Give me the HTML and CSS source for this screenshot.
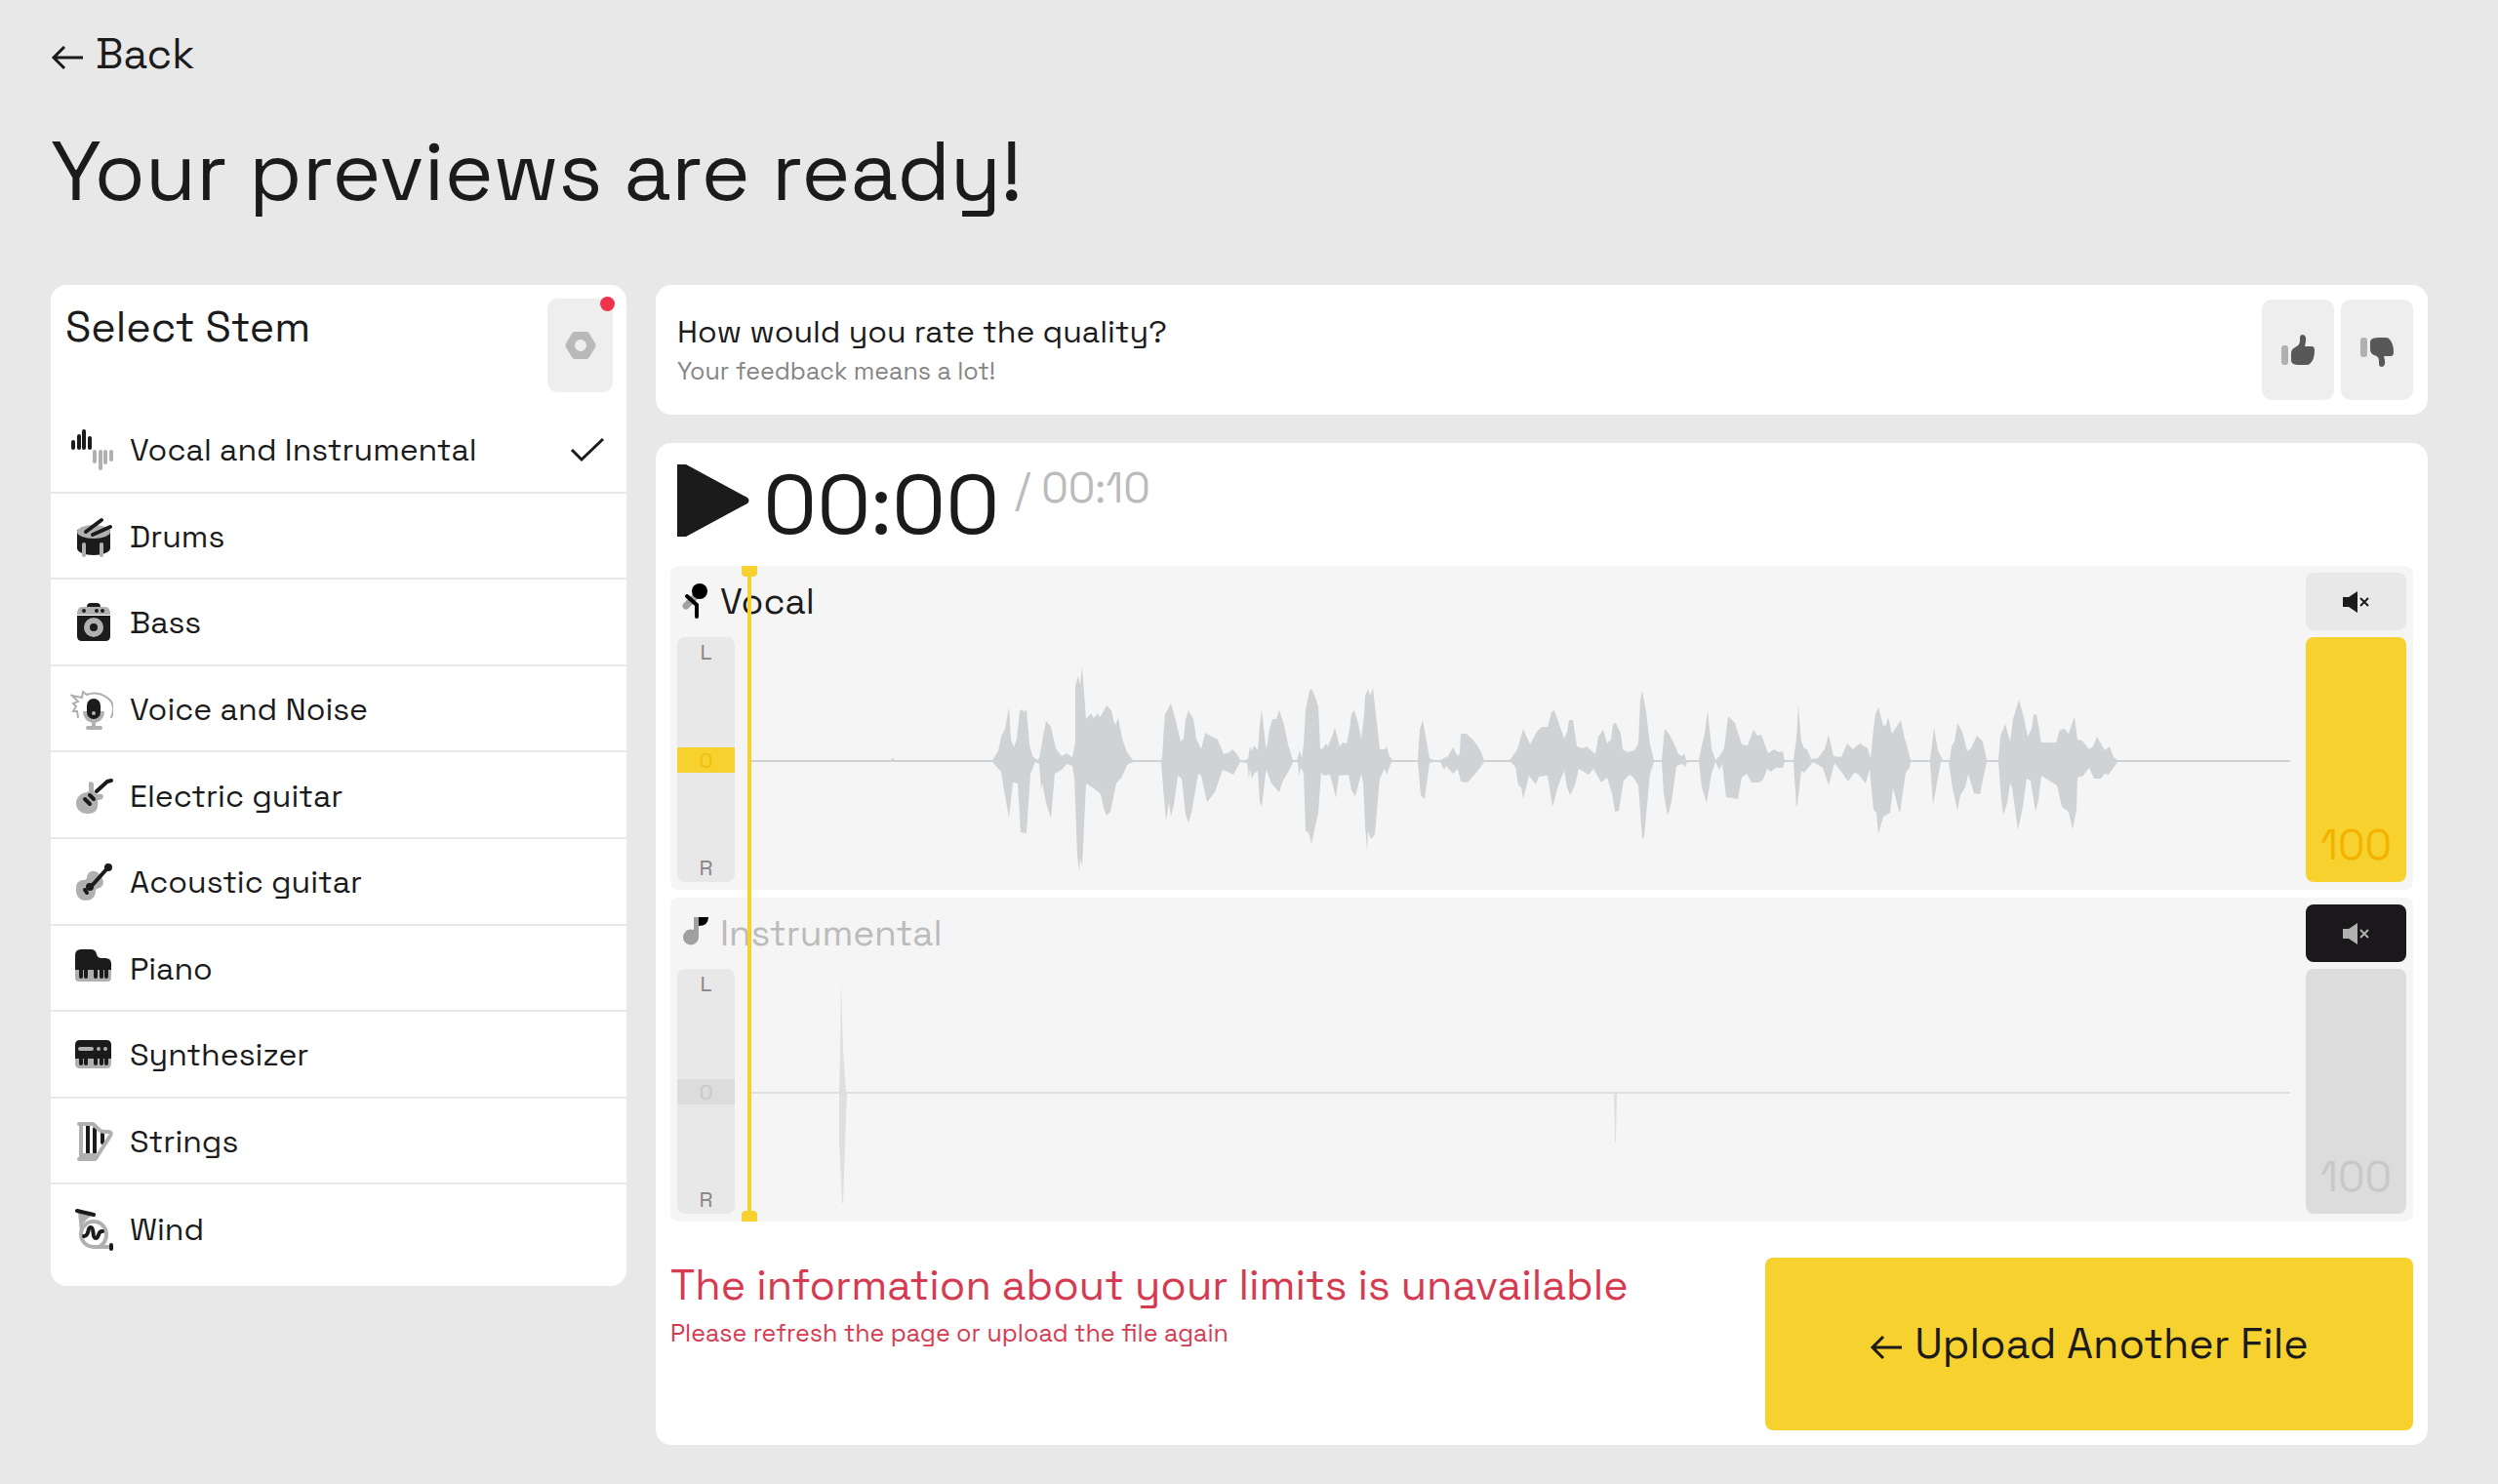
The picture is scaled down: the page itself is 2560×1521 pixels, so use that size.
FILE: index.html
```html
<!DOCTYPE html>
<html lang="en">

<head>
    <meta charset="UTF-8" />
    <meta name="viewport" content="width=device-width, initial-scale=1.0" />
    <title>Your previews are ready!</title>
    <link rel="stylesheet" href="styles.css">
</head>

<body>
    <header class="page-header">
        <a class="back" href="#">
            <svg class="arrow" viewBox="0 0 34 26"><path d="M33 13H3M14 2L3 13l11 11" /></svg>
            Back
        </a>
        <h1>Your previews are ready!</h1>
    </header>

    <main class="layout">
        <!-- Stem list -->
        <aside class="card stems">
            <div class="stems-header">
                <h2>Select Stem</h2>
                <button class="settings-btn" aria-label="Settings">
                    <svg viewBox="0 0 32 28"><path fill-rule="evenodd" d="M10 0h12q2 0 3 2l6 10q1 2 0 4l-6 10q-1 2-3 2H10q-2 0-3-2L1 16q-1-2 0-4L7 2q1-2 3-2zM16 8a6 6 0 1 0 0 12a6 6 0 1 0 0-12z" /></svg>
                    <span class="dot"></span>
                </button>
            </div>

            <ul class="stem-list">
                <li>
                    <button class="stem">
                        <svg class="icon" viewBox="0 0 44 44">
                            <path class="line dark" d="M3 14v6M9 8v12M14 3v17M20 10v10" />
                            <path class="line grey" d="M25 24v10M31 24v17M36 24v11M42 24v8" />
                        </svg>
                        <span>Vocal and Instrumental</span>
                        <svg class="check" viewBox="0 0 36 26"><path d="M2 13l10 10L34 2" /></svg>
                    </button>
                </li>
                <li>
                    <button class="stem">
                        <svg class="icon" viewBox="0 0 44 44">
                            <path class="dark" d="M7 15v19c0 4 8 7 17 7s17-3 17-7V15z" />
                            <ellipse class="grey" cx="24" cy="17" rx="17" ry="7" />
                            <path class="line grey" d="M14 30v11M32 30v11" />
                            <path class="line dark" d="M16 17L32 5M23 20l18-8" />
                        </svg>
                        <span>Drums</span>
                    </button>
                </li>
                <li>
                    <button class="stem">
                        <svg class="icon" viewBox="0 0 44 44">
                            <path class="dark" d="M17 6q0-4 4-4h6q4 0 4 4zM7 15h34v21q0 5-5 5H12q-5 0-5-5z" />
                            <path class="grey" d="M7 14q0-8 5-8h24q5 0 5 8z" />
                            <circle class="dark" cx="14" cy="10" r="2" />
                            <circle class="dark" cx="27" cy="10" r="2" />
                            <circle class="dark" cx="33" cy="10" r="2" />
                            <circle class="grey" cx="24" cy="27" r="10" />
                            <circle class="dark" cx="24" cy="27" r="4" />
                        </svg>
                        <span>Bass</span>
                    </button>
                </li>
                <li>
                    <button class="stem">
                        <svg class="icon" viewBox="0 0 44 44">
                            <path class="thin" d="M8 30l-1-6-4 0 3-5-3-3 5-2-6-6 10 2 1-6 4 3c13-5 28 4 27 16 0 3-1 5-2 7" />
                            <path class="grey" d="M13 24h22c0 7-5 12-11 12s-11-5-11-12z" />
                            <path class="line grey" d="M24 34v6M18 41h13" />
                            <rect class="dark" x="17" y="11" width="14" height="21" rx="7" />
                            <circle class="grey" cx="24" cy="26" r="2" />
                        </svg>
                        <span>Voice and Noise</span>
                    </button>
                </li>
                <li>
                    <button class="stem">
                        <svg class="icon" viewBox="0 0 44 44">
                            <path class="grey" d="M19 8q3-2 5 1v8l4 3q6-1 6 3-1 3-6 3 2 14-10 14C10 40 6 35 6 29s5-10 11-11q3-1 2-4z" />
                            <path class="line dark" d="M27 17L38 7l4-1" />
                            <path class="line dark" d="M15 25l5 5M20 21l4 4" />
                        </svg>
                        <span>Electric guitar</span>
                    </button>
                </li>
                <li>
                    <button class="stem">
                        <svg class="icon" viewBox="0 0 44 44">
                            <path class="grey" d="M17 17c1-7 8-8 12-4s7 10 3 14c-2 2-6 1-6 4 0 7-5 10-10 10C9 41 5 35 6 28c0-6 4-8 8-8q3 0 3-3z" />
                            <path class="line dark" d="M21 27L38 8M15 30l2 3" />
                            <circle class="dark" cx="20" cy="27" r="4" />
                            <circle class="dark" cx="39" cy="7" r="4" />
                        </svg>
                        <span>Acoustic guitar</span>
                    </button>
                </li>
                <li>
                    <button class="stem">
                        <svg class="icon" viewBox="0 0 44 44">
                            <path class="grey" d="M5 22h37v9q0 4-4 4H9q-4 0-4-4z" />
                            <path class="dark" d="M5 23V8q0-6 6-6h10q5 0 6 5 1 4 5 4h4q6 0 6 6v6z" />
                            <path class="line dark" d="M11 22v8M16 22v8M26 22v8M32 22v8M37 22v8" />
                        </svg>
                        <span>Piano</span>
                    </button>
                </li>
                <li>
                    <button class="stem">
                        <svg class="icon" viewBox="0 0 44 44">
                            <path class="grey" d="M5 22h37v9q0 5-5 5H10q-5 0-5-5z" />
                            <path class="dark" d="M5 26V12q0-5 5-5h27q5 0 5 5v14z" />
                            <path class="line dark" d="M11 25v6M16 25v6M26 25v6M32 25v6M37 25v6" />
                            <path class="line grey" d="M10 16h12M29 16h0M36 16h0" />
                        </svg>
                        <span>Synthesizer</span>
                    </button>
                </li>
                <li>
                    <button class="stem">
                        <svg class="icon" viewBox="0 0 44 44">
                            <path class="line dark" d="M18 6v28M25 9v24M33 14v9" />
                            <path class="line grey" d="M9 4h13c5 0 5 8 13 8h4q4 0 2 4L27 38q-1 2-3 2H9M11 4v33" />
                            <path class="grey" d="M9 34h18l-2 7H9z" />
                        </svg>
                        <span>Strings</span>
                    </button>
                </li>
                <li>
                    <button class="stem">
                        <svg class="icon" viewBox="0 0 44 44">
                            <path class="grey" d="M8 4l14 4q-9 5-12 17z" />
                            <path class="line grey" d="M41 40H24a13 13 0 1 1 13-13q0 8-6 12" />
                            <path class="line dark" d="M7 3l17 4M42 38v4" />
                            <path class="line dark" d="M14 29c6 0 3-9 7-9s1 11 5 11 2-8 7-7" />
                        </svg>
                        <span>Wind</span>
                    </button>
                </li>
            </ul>
        </aside>

        <div class="content">
            <section class="card rating">
                <div class="rating-text">
                    <p class="question">How would you rate the quality?</p>
                    <p class="hint">Your feedback means a lot!</p>
                </div>
                <button class="rate-btn" aria-label="Good">
                    <svg viewBox="0 0 34 34">
                        <rect class="grey" x="0" y="12" width="7" height="20" rx="3" />
                        <path d="M10 20q0-4 4-6 5-2 5-7V4q0-3 3-3 4 1 3 7l-1 5h7q3 0 3 4 0 9-4 13-1 2-4 2h-7q-6 0-8-2-1-1-1-3z" />
                    </svg>
                </button>
                <button class="rate-btn" aria-label="Bad">
                    <svg viewBox="0 0 34 34">
                        <rect class="grey" x="0" y="4" width="7" height="20" rx="3" />
                        <path d="M10 16q0 4 4 6 5 1 5 6v3q0 3 3 3 4-1 3-7l-1-4h7q3 0 3-4 0-9-4-13-1-2-4-2h-7q-6 0-8 2-1 1-1 3z" />
                    </svg>
                </button>
            </section>

            <section class="card player">
                <div class="transport">
                    <button class="play-btn" aria-label="Play">
                        <svg viewBox="0 0 74 74"><path d="M0 0h9l63 34q3 3 0 6L9 74H0z" /></svg>
                    </button>
                    <span class="time">00:00</span>
                    <span class="duration">/ 00:10</span>
                </div>

                <div class="tracks">
                    <div class="track">
                        <div class="track-label">
                            <svg viewBox="0 0 28 36">
                                <path class="mic-body" d="M4 23L16 11" />
                                <circle cx="18" cy="8" r="8" />
                                <path class="mic-hand" d="M5 13l10 9v12" />
                            </svg>
                            <span>Vocal</span>
                        </div>
                        <div class="pan">
                            <span>L</span>
                            <input type="range" min="-50" max="50" value="0" aria-label="Vocal pan">
                            <span class="pan-value">0</span>
                            <span>R</span>
                        </div>
                        <svg class="wave" viewBox="770 653 1578 251" preserveAspectRatio="none">
                            <path d="M770 779H914L916 777L918 779H1018L1024 770 1027 755 1031 747 1035 725 1037 758 1040 766 1043 757 1046 729 1049 727 1050 730 1053 727 1056 763 1059 775 1064 779 1066 777 1070 755 1073 739 1078 745 1083 767 1089 775 1094 772 1100 776 1103 760 1103 703 1106 693 1108 702 1110 683 1114 737 1119 731 1122 736 1126 731 1128 735 1132 729 1135 723 1140 728 1142 738 1144 743 1147 736 1151 757 1156 771 1162 779
                            H1191L1192 777 1194 743 1195 732 1201 721 1205 735 1211 760 1214 757 1216 737 1219 728 1224 737 1227 757 1232 768 1234 760 1236 751 1243 755 1249 758 1255 773 1261 771 1264 768 1268 772 1272 779 1277 779 1280 778 1282 765 1284 770 1286 764 1290 769 1292 743 1294 727 1298 763 1299 768 1302 747 1305 737 1309 737 1312 728 1317 743 1321 763 1326 779 1330 779 1333 769 1335 777 1337 763 1339 727 1343 708 1345 706 1348 712 1352 724 1354 767 1356 768 1360 762 1362 765 1366 755 1369 746 1374 765 1377 761 1381 762 1384 748 1386 732 1389 728 1393 742 1396 757 1399 733 1400 713 1403 706 1405 713 1408 705 1411 732 1415 768 1420 768 1422 765 1425 775 1428 779
                            H1454L1456 748 1459 738 1463 760 1466 777 1470 779 1477 779 1485 775 1490 766 1495 775 1497 772 1498 752 1504 752 1512 760 1518 769 1522 779
                            H1547L1549 778 1556 768 1562 747 1569 763 1576 750 1581 745 1587 745 1591 730 1594 728 1598 740 1604 757 1607 750 1609 738 1613 738 1617 765 1623 767 1627 765 1636 773 1639 755 1644 748 1648 762 1652 758 1654 742 1657 741 1662 752 1664 768 1669 771 1676 769 1680 762 1682 717 1684 708 1688 730 1692 763 1696 779
                            H1704L1707 747 1712 753 1717 763 1721 773 1725 775 1727 772 1729 779H1742L1745 764 1748 752 1751 728 1755 767 1759 779 1763 775 1768 767 1771 742 1772 734 1779 741 1786 763 1792 764 1798 748 1802 754 1806 753 1813 772 1819 768 1824 771 1828 770 1830 779H1839L1842 757 1844 723 1847 760 1850 767 1853 768 1857 778 1864 777 1871 768 1875 753 1880 775 1888 776 1894 762 1900 768 1907 762 1915 767 1918 777 1921 747 1923 732 1926 725 1931 744 1934 743 1936 735 1940 752 1949 738 1953 757 1956 767 1959 779
                            H1979L1983 746 1987 769 1992 779H1999L2001 765 2004 760 2007 741 2012 750 2017 770 2021 767 2027 754 2033 760 2037 779H2049L2051 755 2056 742 2061 760 2064 737 2070 717 2075 735 2079 755 2083 747 2085 733 2088 732 2093 761 2108 761 2112 748 2117 747 2121 752 2124 743 2127 735 2130 758 2135 759 2142 768 2146 765 2150 755 2158 769 2163 765 2167 776 2171 779H2348V781
                            H2171L2162 794 2158 793 2154 798 2147 798 2142 787 2136 795 2130 797 2129 830 2125 850 2121 832 2114 827 2109 805 2093 795 2090 820 2087 832 2082 800 2078 798 2074 827 2069 851 2063 807 2061 803 2058 823 2054 835 2052 820 2049 781H2037L2030 814 2024 813 2018 793 2015 807 2010 815 2007 831 2002 808 1998 781H1990L1986 803 1982 825 1979 781H1959L1958 787 1954 792 1948 834 1941 808 1938 833 1931 837 1926 855 1924 833 1921 830 1917 788 1913 803 1905 793 1901 792 1895 801 1888 791 1881 782 1875 805 1869 787 1859 781 1850 792 1847 790 1843 825 1842 827 1839 781H1830L1828 787 1821 787 1816 791 1812 788 1808 799 1804 802 1796 802 1791 793 1786 797 1782 819 1770 817 1766 783 1763 789 1759 781 1755 793 1750 823 1745 807 1742 781
                            H1730L1728 786 1725 783 1719 785 1714 822 1710 836 1706 813 1704 781H1696L1692 793 1686 857 1684 860 1680 805 1675 797 1671 794 1665 800 1660 831 1656 832 1653 813 1648 797 1642 802 1634 788 1629 794 1619 788 1615 805 1610 815 1607 807 1604 790 1598 805 1592 827 1587 795 1578 796 1575 804 1568 795 1562 819 1560 807 1557 805 1554 786 1549 781
                            H1522L1514 792 1505 802 1498 801 1495 788 1490 793 1483 785 1481 789 1477 781H1470L1466 782 1461 819 1457 815 1454 781H1427L1422 794 1420 788 1415 798 1410 855 1406 860 1403 852 1402 872 1400 847 1398 803 1396 793 1390 816 1386 810 1383 794 1373 795 1370 818 1367 805 1364 794 1358 795 1355 792 1352 833 1345 865 1342 853 1339 852 1337 792 1334 787 1332 796 1331 781 1326 781 1324 786 1315 802 1312 812 1304 803 1299 789 1298 793 1294 827 1292 822 1290 790 1286 793 1284 798 1282 788 1281 798 1279 782 1272 781 1265 794 1259 791 1254 789 1246 812 1238 822 1232 795 1229 793 1222 833 1219 843 1216 835 1212 798 1208 795 1204 825 1201 837 1199 822 1196 842 1193 807 1191 781
                            H1162L1156 784 1151 796 1145 803 1139 832 1135 836 1132 828 1129 814 1122 808 1114 803 1110 888 1108 880 1107 893 1105 877 1102 797 1100 785 1094 783 1089 789 1082 793 1078 839 1073 823 1069 802 1068 810 1066 783 1062 781 1057 793 1053 854 1047 853 1044 803 1039 802 1035 838 1030 810 1027 791 1018 781H770z" />
                        </svg>
                        <div class="volume">
                            <button class="mute-btn" aria-label="Mute vocal">
                                <svg viewBox="0 0 28 22"><path d="M0 6h6l9-6v22l-9-6H0z" /><path class="cross" d="M18 7l8 8M26 7l-8 8" /></svg>
                            </button>
                            <div class="volume-slider">
                                <input type="range" min="0" max="100" value="100" aria-label="Vocal volume">
                                <span>100</span>
                            </div>
                        </div>
                    </div>

                    <div class="track muted">
                        <div class="track-label">
                            <svg viewBox="0 0 28 36">
                                <path class="note" d="M12 2h5v21a8 8 0 1 1-5-8z" />
                                <path d="M17 2h10q0 9-10 9z" />
                            </svg>
                            <span>Instrumental</span>
                        </div>
                        <div class="pan">
                            <span>L</span>
                            <input type="range" min="-50" max="50" value="0" aria-label="Instrumental pan">
                            <span class="pan-value">0</span>
                            <span>R</span>
                        </div>
                        <svg class="wave" viewBox="770 653 1578 251" preserveAspectRatio="none">
                            <path d="M770 779H861L862 735 863 665 865 735 868 779H1655H2348V781H1658L1657 831H1656L1655 781H869L868 805 865 893H864L861 830V781H770z" />
                        </svg>
                        <div class="volume">
                            <button class="mute-btn" aria-label="Unmute instrumental">
                                <svg viewBox="0 0 28 22"><path d="M0 6h6l9-6v22l-9-6H0z" /><path class="cross" d="M18 7l8 8M26 7l-8 8" /></svg>
                            </button>
                            <div class="volume-slider">
                                <input type="range" min="0" max="100" value="100" aria-label="Instrumental volume">
                                <span>100</span>
                            </div>
                        </div>
                    </div>

                    <div class="playhead"></div>
                </div>

                <div class="player-footer">
                    <div class="error">
                        <p class="error-title">The information about your limits is unavailable</p>
                        <p class="error-text">Please refresh the page or upload the file again</p>
                    </div>
                    <button class="upload-btn">
                        <svg class="arrow" viewBox="0 0 34 26"><path d="M33 13H3M14 2L3 13l11 11" /></svg>
                        Upload Another File
                    </button>
                </div>
            </section>
        </div>
    </main>
</body>

</html>
```
FILE: styles.css
```css
* {
    box-sizing: border-box;
}

body {
    font-family: "Space Grotesk", Inter, "Liberation Sans", sans-serif;
    background: #e8e8e8;
    color: #1b1b1c;
    margin: 0;
    padding: 28px 72px 40px 52px;
}

h1,
h2,
p,
ul {
    margin: 0;
    padding: 0;
    font-weight: normal;
}

button {
    font: inherit;
    color: inherit;
    background: none;
    border: none;
    padding: 0;
    cursor: pointer;
}

svg {
    display: block;
    flex: none;
}

.card {
    background: #fff;
    border-radius: 16px;
}

/* Header */
.back {
    display: inline-flex;
    align-items: center;
    gap: 12px;
    font-size: 43px;
    line-height: 56px;
    color: inherit;
    text-decoration: none;
}

.arrow {
    width: 34px;
    height: 26px;
    margin-top: 6px;
    fill: none;
    stroke: currentColor;
    stroke-width: 3;
}

h1 {
    margin: 36px 0 60px;
    font-size: 85px;
    line-height: 112px;
}

.layout {
    display: grid;
    grid-template-columns: 590px 1fr;
    gap: 30px;
    align-items: start;
}

/* Stems */
.stems {
    padding-bottom: 15px;
}

.stems-header {
    display: flex;
    justify-content: space-between;
    height: 125px;
    padding: 14px 14px 0 15px;
}

.stems-header h2 {
    font-size: 43px;
    line-height: 60px;
}

.settings-btn {
    position: relative;
    display: flex;
    align-items: center;
    justify-content: center;
    width: 67px;
    height: 96px;
    background: #eee;
    border-radius: 10px;
}

.settings-btn svg {
    width: 32px;
    height: 28px;
    fill: #b9b9b9;
}

.dot {
    position: absolute;
    top: -2px;
    right: -2px;
    width: 15px;
    height: 15px;
    border-radius: 50%;
    background: #f0324b;
}

.stem-list {
    display: grid;
    grid-auto-rows: 1fr;
    height: 886px;
    list-style: none;
}

.stem-list li {
    border-bottom: 2px solid #e8e8e8;
}

.stem-list li:last-child {
    border-bottom: none;
}

.stem {
    display: flex;
    align-items: center;
    gap: 17px;
    width: 100%;
    height: 100%;
    padding: 2px 22px 0 20px;
    font-size: 32px;
    text-align: left;
}

.stem span {
    flex: 1;
}

.icon {
    width: 44px;
    height: 44px;
}

.dark {
    fill: #1b1b1c;
}

.grey {
    fill: #b0b0b0;
}

.line {
    fill: none;
    stroke-width: 4;
    stroke-linecap: round;
    stroke-linejoin: round;
}

.line.dark {
    stroke: #1b1b1c;
}

.line.grey {
    stroke: #b0b0b0;
}

.thin {
    fill: none;
    stroke: #b0b0b0;
    stroke-width: 2;
    stroke-linecap: round;
}

.check {
    width: 36px;
    height: 26px;
    fill: none;
    stroke: #1b1b1c;
    stroke-width: 3;
}

/* Rating */
.content {
    display: grid;
    gap: 29px;
}

.rating {
    display: flex;
    align-items: center;
    gap: 7px;
    height: 133px;
    padding: 0 15px 0 22px;
}

.rating-text {
    flex: 1;
}

.question {
    font-size: 32px;
    line-height: 42px;
}

.hint {
    font-size: 25px;
    line-height: 38px;
    color: #858585;
}

.rate-btn {
    display: flex;
    align-items: center;
    justify-content: center;
    width: 74px;
    height: 103px;
    background: #eee;
    border-radius: 10px;
}

.rate-btn svg {
    width: 34px;
    height: 34px;
    fill: #585858;
}

.rate-btn .grey {
    fill: #b0b0b0;
}

/* Player */
.player {
    padding: 22px 15px 15px;
}

.transport {
    display: flex;
    align-items: flex-start;
    height: 104px;
    padding-left: 7px;
}

.play-btn svg {
    width: 74px;
    height: 74px;
    fill: #1b1b1c;
}

.time {
    margin: 0 16px 0 14px;
    font-size: 86px;
    line-height: 82px;
}

.duration {
    font-size: 43px;
    line-height: 50px;
    color: #bbb;
}

.tracks {
    position: relative;
    display: grid;
    gap: 8px;
}

.track {
    display: grid;
    grid-template-columns: 59px 1fr 103px;
    grid-template-rows: 66px 251px;
    column-gap: 16px;
    height: 332px;
    padding: 7px;
    background: #f5f5f5;
    border-radius: 8px;
}

.track-label {
    grid-column: 1 / 3;
    display: flex;
    align-items: center;
    gap: 11px;
    height: 58px;
    padding-left: 5px;
    font-size: 37px;
}

.track-label svg {
    width: 28px;
    height: 36px;
}

.mic-body {
    fill: none;
    stroke: #a0a0a0;
    stroke-width: 7;
    stroke-linecap: round;
}

.mic-hand {
    fill: none;
    stroke: #000;
    stroke-width: 4;
    stroke-linecap: round;
}

.note {
    fill: #a0a0a0;
}

.muted .track-label span {
    color: #bbb;
}

.pan {
    position: relative;
    grid-row: 2;
    display: flex;
    flex-direction: column;
    align-items: center;
    justify-content: space-between;
    background: #e8e8e8;
    border-radius: 8px;
    font-size: 22px;
    line-height: 30px;
    color: #858585;
}

.pan span {
    position: relative;
    pointer-events: none;
}

.pan .pan-value {
    color: #f2bd0c;
}

.muted .pan .pan-value {
    color: #c8c8c8;
}

.pan input,
.volume-slider input {
    position: absolute;
    inset: 0;
    width: 100%;
    height: 100%;
    margin: 0;
    appearance: none;
    writing-mode: vertical-lr;
    direction: rtl;
    background: none;
    border-radius: 8px;
}

.pan input::-webkit-slider-thumb {
    appearance: none;
    width: 59px;
    height: 26px;
    background: #f7d22f;
}

.muted .pan input::-webkit-slider-thumb {
    background: #dcdcdc;
}

.wave {
    grid-row: 2;
    width: 100%;
    height: 251px;
    fill: #cfd3d5;
}

.muted .wave {
    fill: #dfdfdf;
}

.volume {
    grid-column: 3;
    grid-row: 1 / 3;
    display: grid;
    grid-template-rows: 59px 251px;
    gap: 7px;
}

.mute-btn {
    display: flex;
    align-items: center;
    justify-content: center;
    background: #e8e8e8;
    border-radius: 8px;
}

.mute-btn svg {
    width: 28px;
    height: 22px;
    fill: currentColor;
}

.cross {
    fill: none;
    stroke: currentColor;
    stroke-width: 2;
}

.muted .mute-btn {
    background: #1b181c;
    color: #b0b0b0;
}

.volume-slider {
    position: relative;
    display: flex;
    align-items: flex-end;
    justify-content: center;
    padding-bottom: 12px;
    font-size: 43px;
    line-height: 50px;
    color: #f2b200;
}

.volume-slider span {
    position: relative;
    pointer-events: none;
}

.volume-slider input {
    background: #f7d22f;
}

.volume-slider input::-webkit-slider-thumb {
    appearance: none;
    width: 103px;
    height: 1px;
    background: none;
}

.muted .volume-slider {
    color: #c8c8c8;
}

.muted .volume-slider input {
    background: #dcdcdc;
}

.playhead {
    position: absolute;
    top: 0;
    bottom: 0;
    left: 79px;
    width: 4px;
    background: #f7d22f;
}

.playhead::before,
.playhead::after {
    content: "";
    position: absolute;
    left: -6px;
    width: 16px;
    height: 11px;
    background: #f7d22f;
}

.playhead::before {
    top: 0;
    border-radius: 0 0 4px 4px;
}

.playhead::after {
    bottom: 0;
    border-radius: 4px 4px 0 0;
}

/* Footer */
.player-footer {
    display: flex;
    justify-content: space-between;
    margin-top: 37px;
}

.error {
    color: #d63a50;
}

.error-title {
    font-size: 43px;
    line-height: 58px;
}

.error-text {
    font-size: 25px;
    line-height: 38px;
}

.upload-btn {
    display: flex;
    align-items: center;
    justify-content: center;
    gap: 12px;
    width: 664px;
    height: 177px;
    background: #f7d22f;
    border-radius: 8px;
    font-size: 43px;
}
```
